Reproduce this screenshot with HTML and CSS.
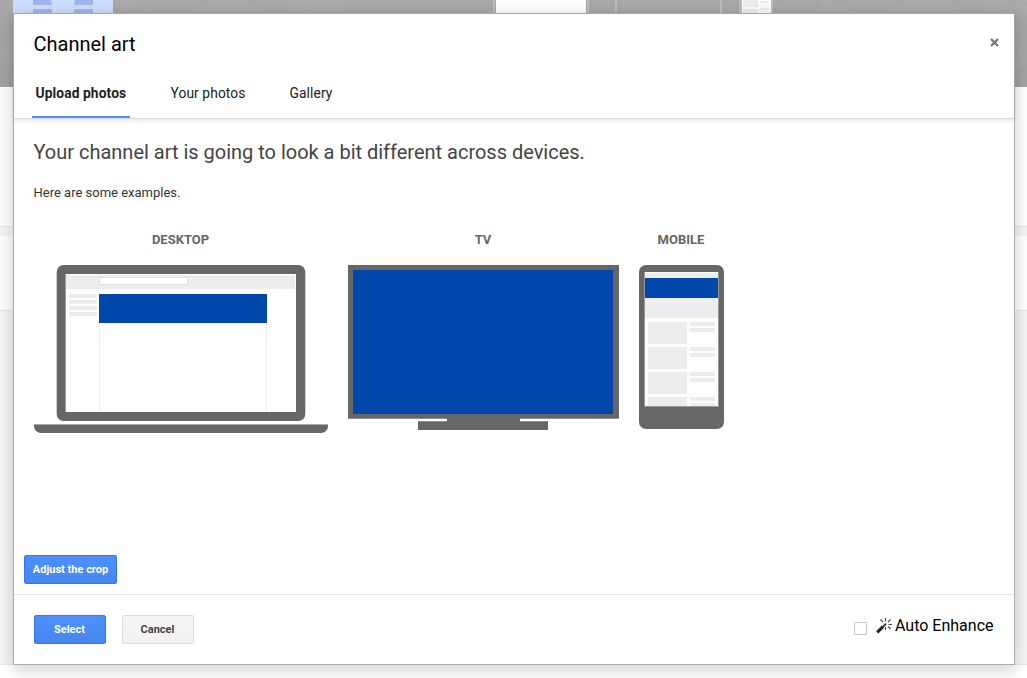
FILE: index.html
```html
<!DOCTYPE html>
<html lang="en">
<head>
<meta charset="utf-8">
<title>Channel art</title>
<link rel="stylesheet" href="styles.css">
</head>
<body>
<div class="page" aria-hidden="true">
  <div class="banner">
    <svg width="1027" height="87" viewBox="0 0 1027 87">
      <g fill="#fff" fill-opacity=".03">
        <path d="M120 0h33l-33 13zM190 13l22-13h33l22 13zM288 0h58v13h-58zM820 0h10l23 13h-33zM887 13l20-13h38l22 13zM984 0h43v13h-43z"/>
        <path d="M0 53l13-9v20zM1014 42l13 8v12l-13 9z"/>
      </g>
      <g fill="none" stroke="#fff" stroke-opacity=".07">
        <path d="M126 0l27 13M190 13l22-13M245 0l22 13M307 13l20-13M478 0l16 9M596 0l20 12M722 5l14 8M776 9l16-9M827 0l25 13M887 13l20-13M943 0l24 13M1003 13l24-13M13 44L0 55l13 9M1014 42l13 8M1014 71l13-8"/>
      </g>
      <path fill="#ccdefc" d="M13 0h100v13H13z"/>
      <path fill="#9fb6ed" d="M33 0h18l1 5H33zM75 0h18v5H74zM33 9h19v4H33zM74 9h19v4H74z"/>
      <path fill="#bdbdbd" d="M493 0h2v13h-2zM587 0h2v13h-2zM615 0h2v13h-2zM720 0h2v13h-2zM739 0h3v13h-3zM771 0h2v13h-2z"/>
      <path fill="#fdfdfd" d="M496 0h90v13h-90zM742 0h29v13h-29z"/>
      <path fill="#ececec" d="M743 0h15v7h-15zM743 9h15v4h-15zM760 1h9v2h-9zM760 8h9v2h-9zM760 11h9v1h-9z"/>
    </svg>
  </div>
  <div class="card card-tall"></div>
  <div class="card card-short"></div>
  <div class="page-footer"></div>
</div>

<div class="dialog" role="dialog" aria-labelledby="dialog-title">
  <header class="dialog-header">
    <div class="title-row">
      <h1 id="dialog-title">Channel art</h1>
      <button class="close" aria-label="Close">
        <svg width="9" height="9" viewBox="0 0 9 9"><path d="M1 1l7 7M8 1L1 8" stroke="#777" stroke-width="2.3"/></svg>
      </button>
    </div>
    <nav class="tabs">
      <a class="tab tab-active">Upload photos</a>
      <a class="tab">Your photos</a>
      <a class="tab">Gallery</a>
    </nav>
  </header>

  <main class="content">
    <h2>Your channel art is going to look a bit different across devices.</h2>
    <p class="intro">Here are some examples.</p>
    <div class="devices">
      <figure>
        <figcaption>DESKTOP</figcaption>
        <svg width="294" height="168" viewBox="0 0 294 168">
          <rect x="22.7" width="248.6" height="156" rx="7" fill="#666"/>
          <path fill="#a0a0a0" d="M31 9h231v138H31z"/>
          <path fill="#fff" d="M32 9h230v138H32z"/>
          <path fill="#ededed" d="M32 10h229v14H32z"/>
          <path fill="#fff" stroke="#ddd" d="M65.500 12.500h88v7h-88z"/>
          <path fill="#ededed" d="M35 29h28v4H35zM35 35h28v4H35zM35 41h28v4H35zM35 47h28v4H35z"/>
          <path fill="#ededed" d="M65 58h1v89h-1zM232 58h1v89h-1z"/>
          <path fill="#0047ac" d="M65 29h168v29H65z"/>
          <path fill="#666" d="M0 159h294v2a7 7 0 0 1-7 7H7a7 7 0 0 1-7-7z"/>
          <path fill="#aaa" d="M0 159h294v1H0z"/>
        </svg>
      </figure>
      <figure>
        <figcaption>TV</figcaption>
        <svg width="271" height="168" viewBox="0 0 271 168">
          <path fill="#666" d="M0 0h271v154H172v2h28v9H70v-9h29v-2H0z"/>
          <path fill="#8f8f8f" d="M0 153h99v1H0zM172 153h99v1H172zM70 156h29v1H70zM172 156h28v1H172z"/>
          <path fill="#0047ac" d="M5 5h260v144H5z"/>
        </svg>
      </figure>
      <figure>
        <figcaption>MOBILE</figcaption>
        <svg width="85" height="168" viewBox="0 0 85 168">
          <rect width="85" height="164" rx="7" fill="#666"/>
          <path fill="#999" d="M5 7h75v135H5z"/>
          <path fill="#fff" d="M6 7h73v134H6z"/>
          <path fill="#ededed" d="M6 8h73v45H6z"/>
          <path fill="#0047ac" d="M6 13h73v20H6z"/>
          <path fill="#ededed" d="M9 57h39v22H9zM9 82h39v22H9zM9 107h39v22H9zM9 132h39v9H9zM51 57h25v4H51zM51 63h25v4H51zM51 82h25v4H51zM51 88h25v4H51zM51 107h25v4H51zM51 113h25v4H51zM51 132h25v4H51zM51 138h25v3H51z"/>
        </svg>
      </figure>
    </div>
    <button class="button button-primary crop">Adjust the crop</button>
  </main>

  <footer class="dialog-footer">
    <button class="button button-primary">Select</button>
    <button class="button">Cancel</button>
    <div class="enhance">
      <span class="checkbox" role="checkbox" aria-checked="false"></span>
      <svg class="wand" width="17" height="17" viewBox="0 0 17 17">
        <path d="M1.200 14.300L7 8.700" stroke="#222" stroke-width="3.200"/>
        <path d="M7 8.700l3-2.900" stroke="#444" stroke-width="2.200"/>
        <path d="M9.500 0v3.500M4.500 1.500l2.500 2.500M14.500 1.500L12 4M12.500 6.500H16M9.500 9v3M12 8.500l2.500 2.500" stroke="#444" stroke-width="1.100"/>
      </svg>
      <span class="enhance-label">Auto Enhance</span>
    </div>
  </footer>
</div>
</body>
</html>
```

FILE: styles.css
```css
* {
  box-sizing: border-box;
}

body {
  margin: 0;
  height: 678px;
  overflow: hidden;
  font-family: Roboto, "Liberation Sans", sans-serif;
  color: #333;
}

h1, h2, p, figure {
  margin: 0;
}

svg {
  display: block;
}

.page {
  display: flex;
  flex-direction: column;
  height: 678px;
  background: #f5f5f5;
}

.banner {
  height: 87px;
  flex: none;
  background: linear-gradient(#a8a8a8, #a2a2a2);
}

.card {
  flex: none;
  background: #fff;
  border-bottom: 1px solid #e8e8e8;
}

.card-tall {
  height: 140px;
  margin-bottom: 9px;
}

.card-short {
  height: 75px;
}

.page-footer {
  height: 14px;
  margin-top: auto;
  background: #fff;
  border-top: 1px solid #e8e8e8;
}

.dialog {
  position: absolute;
  top: 13px;
  left: 13px;
  width: 1002px;
  height: 652px;
  display: flex;
  flex-direction: column;
  background: #fff;
  border: 1px solid #acacac;
  box-shadow: 0 4px 16px rgba(0, 0, 0, .2);
}

.dialog-header {
  flex: none;
  height: 105px;
  padding: 0 15px 0 20px;
  border-bottom: 1px solid #dcdcdc;
  box-shadow: 0 2px 4px rgba(0, 0, 0, .1);
}

.title-row {
  display: flex;
  justify-content: space-between;
  height: 62px;
  padding-top: 18px;
}

h1 {
  margin-left: -.5px;
  font-size: 20px;
  line-height: 24px;
  font-weight: 400;
  color: #000;
}

.close {
  height: 9px;
  margin-top: 6px;
  padding: 0;
  border: 0;
  background: none;
}

.tabs {
  display: flex;
  height: 42px;
  margin-left: -2px;
}

.tab {
  height: 42px;
  padding: 9px 4px 0;
  margin-right: 36px;
  font-size: 13.8px;
  letter-spacing: .09px;
  line-height: 16px;
  color: #222;
}

.tab-active {
  width: 98px;
  padding-left: 3.5px;
  margin-right: 36.5px;
  white-space: nowrap;
  font-weight: 700;
  border-bottom: 2px solid #4d90fe;
}

.content {
  flex: 1;
  display: flex;
  flex-direction: column;
  align-items: flex-start;
  padding: 21px 20px 10px;
}

h2 {
  margin-left: -.5px;
  font-size: 20px;
  line-height: 24px;
  font-weight: 400;
  letter-spacing: -.01px;
  color: #444;
}

.intro {
  margin: 21px 0 0 -.5px;
  font-size: 13px;
  line-height: 16px;
}

.devices {
  display: flex;
  gap: 20px;
  margin-top: 31px;
}

figcaption {
  height: 33px;
  margin-left: -1px;
  font-size: 13px;
  line-height: 15px;
  font-weight: 700;
  text-align: center;
  color: #666;
}

.button {
  flex: none;
  width: 72px;
  height: 29px;
  padding: 0 1px 0 0;
  font: 700 11px/27px Roboto, "Liberation Sans", sans-serif;
  color: #444;
  background: linear-gradient(#f5f5f5, #f1f1f1);
  border: 1px solid #dcdcdc;
  border-radius: 2px;
}

.button-primary {
  color: #fff;
  background: linear-gradient(#4d90fe, #4787ed);
  border-color: #3079ed;
}

.crop {
  width: 93px;
  margin: auto 0 0 -10px;
  padding: 0;
}

.dialog-footer {
  flex: none;
  display: flex;
  gap: 16px;
  height: 70px;
  padding: 20px 20.5px 0 20px;
  border-top: 1px solid #e5e5e5;
}

.enhance {
  display: flex;
  margin-left: auto;
}

.checkbox {
  width: 13px;
  height: 13px;
  margin: 7px 9px 0 0;
  border: 1px solid #c6c6c6;
  border-radius: 1px;
}

.wand {
  margin: 3px 2.5px 0 0;
}

.enhance-label {
  font-size: 16px;
  line-height: 22px;
  color: #000;
}
```
